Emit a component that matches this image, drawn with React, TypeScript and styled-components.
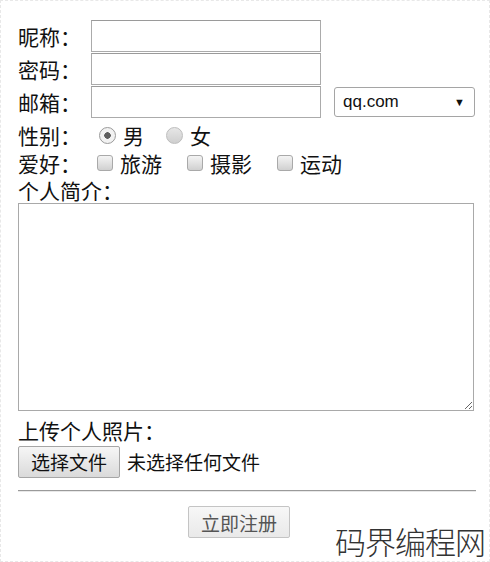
import React from "react";
import styled, { createGlobalStyle } from "styled-components";

const GlobalStyle = createGlobalStyle`
  html, body {
    margin: 0;
    padding: 0;
    background: #fff;
  }
  body {
    font-family: "Noto Sans CJK SC", "Microsoft YaHei", sans-serif;
    color: #111;
  }
`;

const Page = styled.div`
  position: relative;
  box-sizing: border-box;
  width: 490px;
  height: 562px;
  border: 1px dashed #e8e8e8;
  padding: 19px 15px 0 17px;
  overflow: hidden;
`;

const Form = styled.form`
  display: flex;
  flex-direction: column;
  width: 457px;
`;

const FieldList = styled.div`
  display: flex;
  flex-direction: column;
  gap: 1px;
`;

const FieldRow = styled.div`
  display: flex;
  align-items: center;
  height: 32px;
`;

const Label = styled.span`
  width: 63px;
  flex: none;
  font-size: 21px;
  line-height: 1;
  white-space: nowrap;
`;

const TextInput = styled.input`
  box-sizing: border-box;
  width: 230px;
  height: 32px;
  margin: 0 0 0 10px;
  border: 1px solid #ababab;
  border-top-color: #9a9a9a;
  background: #fff;
  padding: 0 4px;
  font-size: 16px;
  outline: none;
`;

const Select = styled.div`
  box-sizing: border-box;
  display: flex;
  align-items: center;
  justify-content: space-between;
  width: 141px;
  height: 30px;
  margin-left: 13px;
  padding: 0 9px 0 8px;
  border: 1px solid #a5a5a5;
  border-radius: 3px;
  background: #fff;
  font-family: "Liberation Sans", Arial, sans-serif;
  font-size: 17px;
  color: #111;
`;

const Arrow = styled.span`
  font-size: 11px;
  color: #111;
`;

const ChoiceRow = styled.div<{ $top?: number }>`
  display: flex;
  align-items: center;
  height: 28px;
  margin-top: ${p => p.$top ?? 0}px;
`;

const Choice = styled.label<{ $lead: number }>`
  display: flex;
  align-items: center;
  margin-left: ${p => p.$lead}px;
  font-size: 21px;
  line-height: 1;
`;

const Radio = styled.span<{ $checked?: boolean }>`
  box-sizing: border-box;
  width: 17px;
  height: 17px;
  margin-right: 7px;
  border-radius: 50%;
  border: 1px solid ${p => (p.$checked ? "#9a9a9a" : "#bdbdbd")};
  background: ${p =>
    p.$checked
      ? "radial-gradient(circle, #5e5e5e 0 3px, #f2f2f2 3.5px)"
      : "linear-gradient(#e6e6e6, #cfcfcf)"};
`;

const Check = styled.span`
  box-sizing: border-box;
  width: 16px;
  height: 16px;
  margin-right: 7px;
  border: 1px solid #a9a9a9;
  border-radius: 3px;
  background: linear-gradient(#f4f4f4, #d0d0d0);
`;

const TextLine = styled.div<{ $height: number; $pad?: number }>`
  height: ${p => p.$height}px;
  padding-top: ${p => p.$pad ?? 0}px;
  box-sizing: border-box;
  font-size: 21px;
  line-height: ${p => p.$height - (p.$pad ?? 0)}px;
`;

const Intro = styled.textarea`
  box-sizing: border-box;
  width: 456px;
  height: 208px;
  margin: 0;
  border: 1px solid #a9a9a9;
  background: #fff;
  resize: both;
  outline: none;
  display: block;
`;

const FileRow = styled.div`
  display: flex;
  align-items: center;
  height: 33px;
`;

const GrayButton = styled.button<{ $muted?: boolean }>`
  box-sizing: border-box;
  width: 102px;
  height: 32px;
  padding: 0;
  border: 1px solid ${p => (p.$muted ? "#c4c4c4" : "#a6a6a6")};
  border-radius: 2px;
  background: ${p =>
    p.$muted
      ? "linear-gradient(#f7f7f7, #e9e9e9)"
      : "linear-gradient(#f6f6f6, #dadada)"};
  font-family: "Noto Sans CJK SC", sans-serif;
  font-size: 19px;
  color: ${p => (p.$muted ? "#555" : "#111")};
`;

const FileName = styled.span`
  margin-left: 7px;
  font-size: 19px;
`;

const Rule = styled.hr`
  width: 458px;
  margin: 12px 0 14px;
  border: none;
  border-top: 1px solid #9a9a9a;
  border-bottom: 1px solid #e8e8e8;
`;

const SubmitRow = styled.div`
  display: flex;
  padding-left: 170px;
`;

const Watermark = styled.div`
  position: absolute;
  right: 4px;
  bottom: 0;
  font-family: "Noto Sans CJK SC", sans-serif;
  font-weight: 300;
  font-size: 31px;
  letter-spacing: -1px;
  color: #333;
  background: rgba(255, 255, 255, 0.85);
  line-height: 40px;
  padding-left: 4px;
`;

const hobbies = [
  { name: "旅游", lead: 16 },
  { name: "摄影", lead: 25 },
  { name: "运动", lead: 25 },
];

export default function App() {
  return (
    <>
      <GlobalStyle />
      <Page>
        <Form onSubmit={e => e.preventDefault()}>
          <FieldList>
            <FieldRow>
              <Label>昵称：</Label>
              <TextInput type="text" />
            </FieldRow>
            <FieldRow>
              <Label>密码：</Label>
              <TextInput type="password" />
            </FieldRow>
            <FieldRow>
              <Label>邮箱：</Label>
              <TextInput type="text" />
              <Select>
                <span>qq.com</span>
                <Arrow>▼</Arrow>
              </Select>
            </FieldRow>
          </FieldList>
          <ChoiceRow $top={3}>
            <Label>性别：</Label>
            <Choice $lead={18}>
              <Radio $checked />男
            </Choice>
            <Choice $lead={22}>
              <Radio />女
            </Choice>
          </ChoiceRow>
          <ChoiceRow>
            <Label>爱好：</Label>
            {hobbies.map(h => (
              <Choice key={h.name} $lead={h.lead}>
                <Check />
                {h.name}
              </Choice>
            ))}
          </ChoiceRow>
          <TextLine $height={26}>个人简介：</TextLine>
          <Intro />
          <TextLine $height={34} $pad={5}>
            上传个人照片：
          </TextLine>
          <FileRow>
            <GrayButton type="button">选择文件</GrayButton>
            <FileName>未选择任何文件</FileName>
          </FileRow>
          <Rule />
          <SubmitRow>
            <GrayButton type="submit" $muted>
              立即注册
            </GrayButton>
          </SubmitRow>
        </Form>
        <Watermark>码界编程网</Watermark>
      </Page>
    </>
  );
}
